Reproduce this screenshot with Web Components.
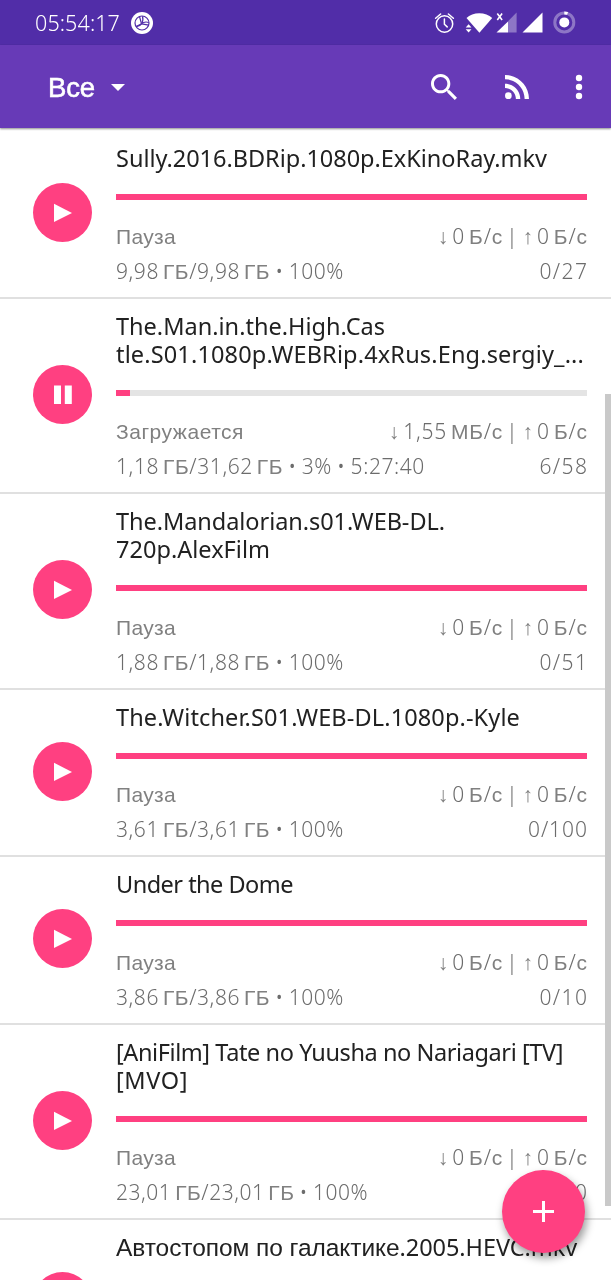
<!DOCTYPE html>
<html lang="ru">
<head>
<meta charset="utf-8">
<title>Torrents</title>
<style>
  html, body {
    margin: 0;
    height: 1280px;
    overflow: hidden;
    background: #fff;
    font-family: "Noto Sans", "Liberation Sans", sans-serif;
  }
</style>
</head>
<body>
<torrent-app></torrent-app>

<script>
// one line of text, cyrillic runs use the grotesque face; tracking is spread to fill `width`
class FitLine extends HTMLElement {
  static get observedAttributes() {
    return ['text', 'width']
  }

  constructor() {
    super();
    this._shadowRoot = this.attachShadow({ mode: 'open' });
    this._shadowRoot.innerHTML = `
      <style>
        :host { display: block; white-space: nowrap; }
        .line { display: inline-block; white-space: pre; }
        .cyr {
          font-family: "Liberation Sans", sans-serif;
          font-size: var(--cyr-size, 1em);
          color: var(--cyr-color, inherit);
          word-spacing: var(--cyr-space, 0);
        }
      </style>
      <span class="line"></span>
    `;
    this.$line = this._shadowRoot.querySelector('.line');
  }

  connectedCallback() {
    this.render();
  }

  attributeChangedCallback() {
    if (this.isConnected) this.render();
  }

  render() {
    const text = this.getAttribute('text') || '';
    const width = Number(this.getAttribute('width'));
    this.$line.style.letterSpacing = '0';
    this.$line.innerHTML = text.replace(/ ?[А-Яа-я↑↓]+/g, '<span class="cyr">$&</span>');
    if (width) {
      const gap = (width - this.$line.getBoundingClientRect().width) / text.length;
      this.$line.style.letterSpacing = gap + 'px';
      this.$line.style.marginRight = -gap + 'px';
    }
  }
}
customElements.define('fit-line', FitLine);


class StatusBar extends HTMLElement {
  constructor() {
    super();
    this.attachShadow({ mode: 'open' }).innerHTML = `
      <style>
        :host {
          display: flex;
          align-items: center;
          height: 45px;
          box-sizing: border-box;
          padding-left: 35px;
          background: #512da8;
          color: #fff;
        }
        fit-line { font-size: 21.5px; font-weight: 350; line-height: 45px; }
        svg { display: block; }
        .badge { margin-left: 11px; }
        .system { margin-left: auto; }
      </style>
      <fit-line text="05:54:17" width="85"></fit-line>
      <svg class="badge" width="22" height="22" viewBox="0 0 22 22">
        <circle cx="11" cy="11" r="11" fill="#fff"/>
        <g fill="none" stroke="#512da8" stroke-width="1.2">
          <circle cx="11" cy="11" r="7"/>
          <path d="M11.500 4.200c.8 2.600.6 5-1 7.600M10.500 11.800c2-1.800 4.400-2.300 7.300-1.300M10.500 11.800c-1.200 1.800-3 2.700-5.300 2.800"/>
          <path d="M10.500 11.800L5.200 14.600M8.500 4.500l2 7.300M10.500 11.800l7.300 1.400"/>
        </g>
      </svg>
      <svg class="system" width="177" height="45" viewBox="0 0 177 45">
        <!-- alarm -->
        <g fill="none" stroke="#fff" stroke-width="1.5" stroke-linecap="round">
          <circle cx="10.500" cy="24" r="8.200"/>
          <path d="M1.600 18.200l5-4.200M19.400 18.200l-5-4.200M10.400 19v5.200l2.800 2.700"/>
        </g>
        <!-- wifi -->
        <path fill="#fff" d="M32.500 18C38.500 11.600 52 11.600 58.200 18L45.400 32.800z"/>
        <path fill="#fff" d="M31.700 27.500l2.900-3.200 2.900 3.200zM31.700 29.200h5.800l-2.900 3.200z"/>
        <!-- sim 1, no service -->
        <path fill="#fff" fill-opacity=".35" d="M82.600 12.500v20H74V21.200z"/>
        <path fill="#fff" d="M74 21.500v11H62.500z"/>
        <path fill="none" stroke="#fff" stroke-width="1.600" d="M63.300 13.500l4.800 6.500M68.100 13.500L63.300 20"/>
        <!-- sim 2 -->
        <path fill="#fff" d="M108.500 12.500v20h-20z"/>
        <!-- battery -->
        <circle cx="130.300" cy="22.400" r="9.500" fill="none" stroke="#fff" stroke-opacity=".35" stroke-width="3"/>
        <path fill="none" stroke="#fff" stroke-width="3" d="M130.300 12.900q1.700 0 3.300.5"/>
        <circle cx="130.300" cy="22.400" r="5" fill="#fff"/>
      </svg>
    `;
  }
}
customElements.define('status-bar', StatusBar);


class AppToolbar extends HTMLElement {
  constructor() {
    super();
    this.attachShadow({ mode: 'open' }).innerHTML = `
      <style>
        :host {
          display: flex;
          align-items: center;
          height: 83px;
          box-sizing: border-box;
          padding: 0 28.5px 0 48px;
          background: #673ab7;
          color: #fff;
          box-shadow: 0 1px 2px rgba(0, 0, 0, .45);
          position: relative;
        }
        fit-line { font-size: 27.5px; line-height: 85px; -webkit-text-stroke: .6px #fff; }
        svg { display: block; fill: #fff; }
        .arrow { margin: 2px 0 0 16px; }
        .search { margin-left: auto; }
        .rss { margin-left: 48px; }
        .more { margin-left: 46px; }
      </style>
      <fit-line text="Все" width="47"></fit-line>
      <svg class="arrow" width="14" height="7" viewBox="0 0 14 7"><path d="M0 0h14L7 7z"/></svg>
      <svg class="search" width="26" height="26" viewBox="3 3 17.490 17.490"><path d="M15.500 14h-.79l-.28-.27C15.410 12.590 16 11.110 16 9.500 16 5.910 13.090 3 9.500 3S3 5.910 3 9.500 5.910 16 9.500 16c1.610 0 3.090-.59 4.230-1.570l.27.28v.79l5 4.990L20.490 19l-4.990-5zm-6 0C7.010 14 5 11.990 5 9.500S7.010 5 9.500 5 14 7.010 14 9.500 11.990 14 9.500 14z"/></svg>
      <svg class="rss" width="24" height="24" viewBox="4 4.440 15.560 15.560"><circle cx="6.180" cy="17.820" r="2.180"/><path d="M4 4.440v2.830c7.030 0 12.730 5.700 12.730 12.730h2.830c0-8.590-6.970-15.560-15.560-15.560zm0 5.660v2.830c3.900 0 7.070 3.170 7.070 7.070h2.830c0-5.470-4.430-9.900-9.900-9.900z"/></svg>
      <svg class="more" width="8" height="26" viewBox="0 0 8 26"><circle cx="4" cy="4" r="3.200"/><circle cx="4" cy="13" r="3.200"/><circle cx="4" cy="22" r="3.200"/></svg>
    `;
  }
}
customElements.define('app-toolbar', AppToolbar);


class PlayButton extends HTMLElement {
  static get observedAttributes() {
    return ['state']
  }

  constructor() {
    super();
    this.attachShadow({ mode: 'open' }).innerHTML = `
      <style>
        :host { display: block; width: 59px; height: 59px; }
        svg { display: block; fill: #fff; border-radius: 50%; background: #ff4081; }
      </style>
      <svg width="59" height="59" viewBox="0 0 59 59"><path/></svg>
    `;
    this.$path = this.shadowRoot.querySelector('path');
  }

  attributeChangedCallback(name, prevVal, newVal) {
    this.$path.setAttribute('d', newVal === 'pause'
      ? 'M21 20.500h7v18.500h-7zM31.800 20.500h7v18.500h-7z'
      : 'M21 20.800v18.200l18-9.100z');
  }
}
customElements.define('play-button', PlayButton);


class TorrentItem extends HTMLElement {
  constructor() {
    super();
    this._shadowRoot = this.attachShadow({ mode: 'open' });
  }

  set data(t) {
    const line = ([text, width]) => `<fit-line text="${text}" width="${width}"></fit-line>`;
    const row = (left, right) => `<div class="row">${left ? line(left) + line(right) : ''}</div>`;
    this._shadowRoot.innerHTML = `
      <style>
        :host {
          display: grid;
          grid-template-columns: 59px 1fr;
          column-gap: 24px;
          align-items: center;
          box-sizing: border-box;
          padding: 13px 24px 8px 33px;
          border-bottom: 2px solid #e0e0e0;
        }
        play-button { margin-top: -7px; }
        .title {
          font-size: 23.5px;
          line-height: 28px;
          color: #212121;
          --cyr-size: 24.5px;
        }
        .title fit-line { height: 28px; }
        .bar { height: 6px; margin: 22px 0 18.5px; background: #e4e4e4; }
        .fill { height: 6px; background: #ff4081; width: ${t.progress}%; }
        .row {
          display: flex;
          justify-content: space-between;
          height: 35px;
          line-height: 35px;
          font-size: 21px;
          font-weight: 350;
          color: #6c6c6c;
          word-spacing: -1px;
          --cyr-size: 21px;
          --cyr-color: #808080;
          --cyr-space: -2.5px;
        }
        .row.speed { word-spacing: -3px; }
      </style>
      <play-button state="${t.state || 'play'}"></play-button>
      <div>
        <div class="title">${t.title.map(line).join('')}</div>
        <div class="bar"><div class="fill"></div></div>
        ${row(t.status, t.speed).replace('"row"', '"row speed"')}
        ${row(t.size, t.peers)}
      </div>
    `;
  }
}
customElements.define('torrent-item', TorrentItem);


class AddButton extends HTMLElement {
  constructor() {
    super();
    this.attachShadow({ mode: 'open' }).innerHTML = `
      <style>
        :host {
          display: flex;
          align-items: center;
          justify-content: center;
          width: 83px;
          height: 83px;
          border-radius: 50%;
          background: #ff4081;
          box-shadow: 2px 5px 9px rgba(0, 0, 0, .4);
        }
      </style>
      <svg width="21" height="21" viewBox="0 0 21 21"><path fill="#fff" d="M9 0h3v9h9v3h-9v9H9v-9H0V9h9z"/></svg>
    `;
  }
}
customElements.define('add-button', AddButton);


const idle = {
  progress: 100,
  status: ['Пауза', 60],
  speed: ['↓ 0 Б/с | ↑ 0 Б/с', 150],
};

const torrents = [
  { ...idle, title: [['Sully.2016.BDRip.1080p.ExKinoRay.mkv', 431]], size: ['9,98 ГБ/9,98 ГБ • 100%', 228], peers: ['0/27', 49] },
  {
    state: 'pause',
    progress: 3,
    title: [['The.Man.in.the.High.Cas', 269], ['tle.S01.1080p.WEBRip.4xRus.Eng.sergiy_...', 468]],
    status: ['Загружается', 128],
    speed: ['↓ 1,55 МБ/с | ↑ 0 Б/с', 199],
    size: ['1,18 ГБ/31,62 ГБ • 3% • 5:27:40', 309],
    peers: ['6/58', 49],
  },
  { ...idle, title: [['The.Mandalorian.s01.WEB-DL.', 329], ['720p.AlexFilm', 154]], size: ['1,88 ГБ/1,88 ГБ • 100%', 228], peers: ['0/51', 49] },
  { ...idle, title: [['The.Witcher.S01.WEB-DL.1080p.-Kyle', 404]], size: ['3,61 ГБ/3,61 ГБ • 100%', 228], peers: ['0/100', 60] },
  { ...idle, title: [['Under the Dome', 177]], size: ['3,86 ГБ/3,86 ГБ • 100%', 228], peers: ['0/10', 49] },
  { ...idle, title: [['[AniFilm] Tate no Yuusha no Nariagari [TV]', 447], ['[MVO]', 72]], size: ['23,01 ГБ/23,01 ГБ • 100%', 252], peers: ['0/10', 49] },
  { progress: 100, title: [['Автостопом по галактике.2005.HEVC.mkv', 461]] },
];

class TorrentApp extends HTMLElement {
  constructor() {
    super();
    this.attachShadow({ mode: 'open' }).innerHTML = `
      <style>
        :host {
          display: flex;
          flex-direction: column;
          position: relative;
          width: 611px;
          height: 1280px;
          overflow: hidden;
          will-change: transform;
        }
        .list { flex: 1; min-height: 0; padding-top: 3px; overflow: hidden; }
        .scrollbar {
          position: absolute;
          right: 0;
          top: 394px;
          width: 6px;
          height: 812px;
          background: #c9c9c9;
        }
        add-button { position: absolute; right: 26px; bottom: 27px; }
      </style>
      <status-bar></status-bar>
      <app-toolbar></app-toolbar>
      <div class="list"></div>
      <div class="scrollbar"></div>
      <add-button></add-button>
    `;
    this.$list = this.shadowRoot.querySelector('.list');
  }

  connectedCallback() {
    torrents.forEach(t => {
      const item = document.createElement('torrent-item');
      item.data = t;
      this.$list.append(item);
    });
  }
}
customElements.define('torrent-app', TorrentApp);
</script>
</body>
</html>
